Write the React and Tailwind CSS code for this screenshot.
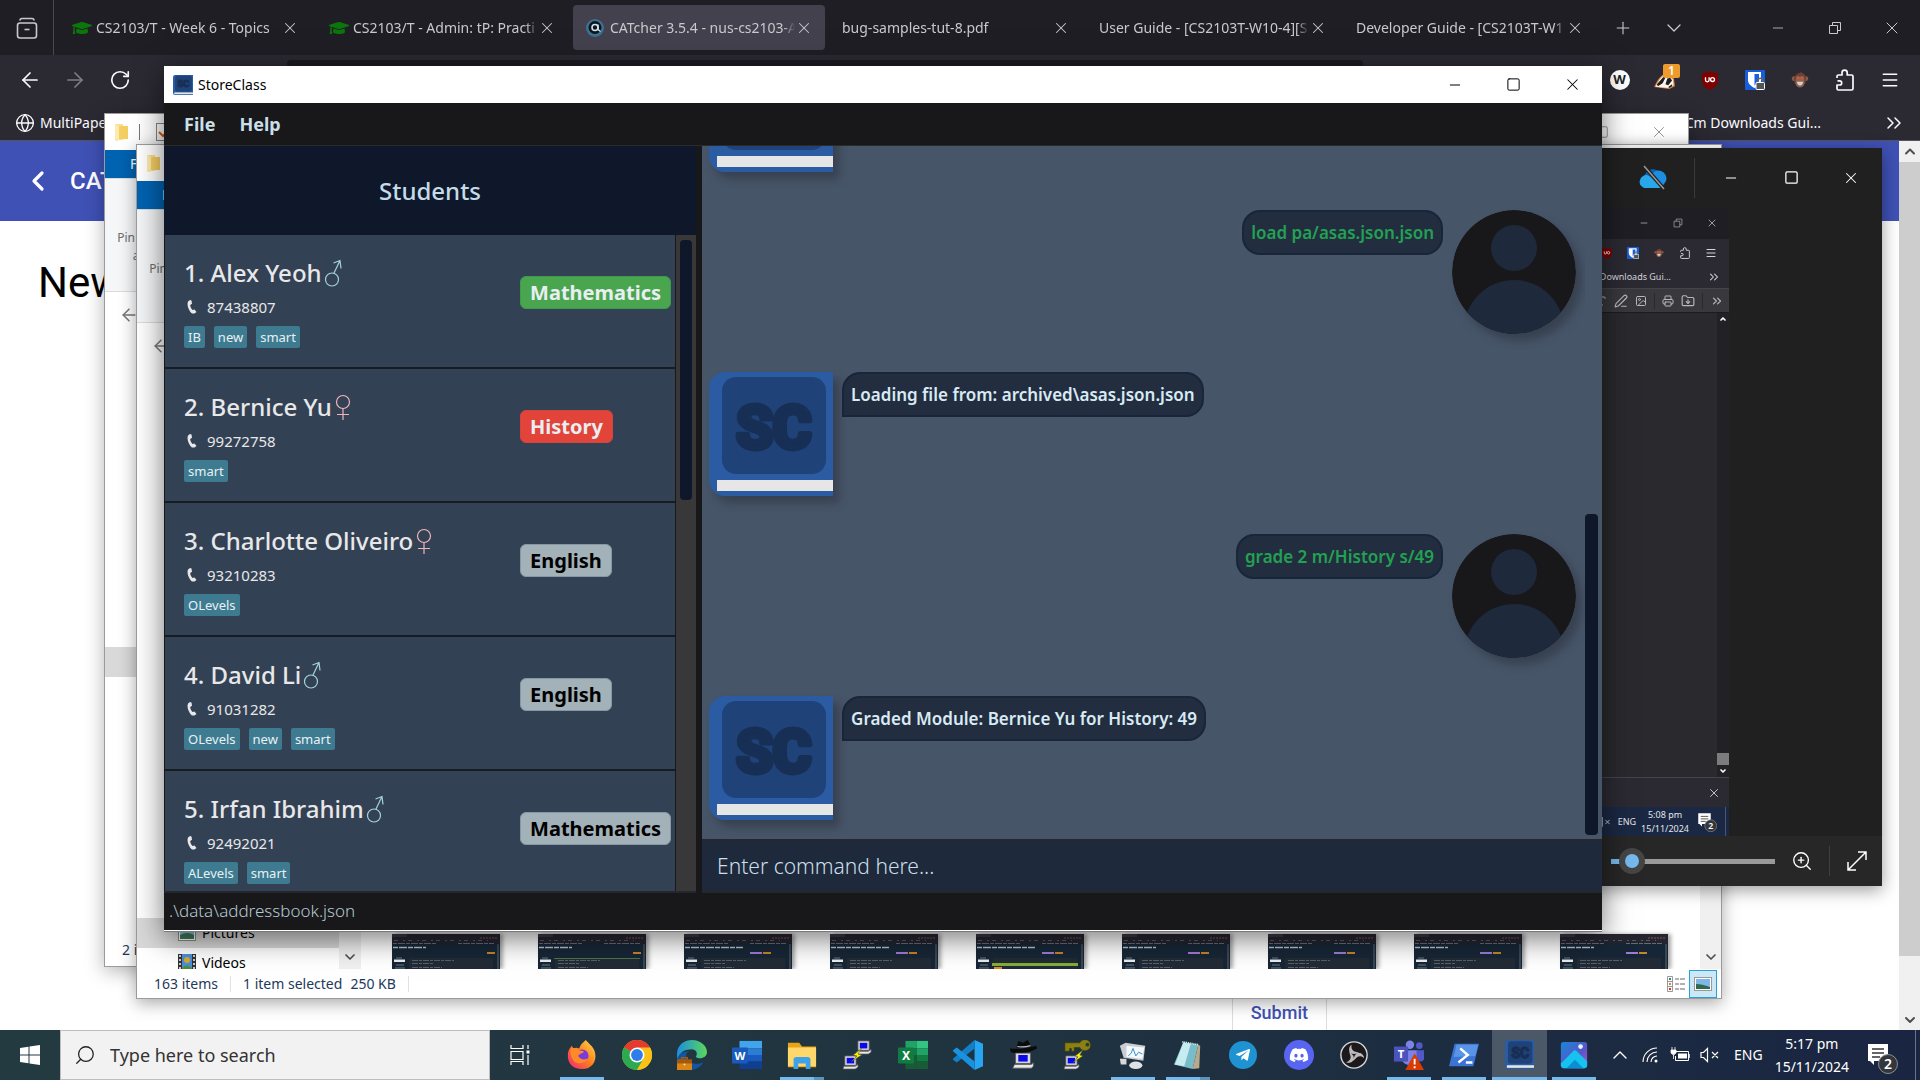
import React from "react";
import {
  ArrowLeft, ArrowRight, ChevronDown, ChevronLeft, ChevronUp, ChevronsRight, FolderDown,
  Globe, Image as ImageIcon, Menu, Minus, PenLine, Plus, Printer, RotateCw, Search, Square, Type, X, ZoomIn,
} from "lucide-react";
import { FaGraduationCap, FaDiscord, FaTelegramPlane } from "react-icons/fa";

/* ---------- shared drawings ---------- */

function BookLogo({ className }) {
  return (
    <svg viewBox="0 0 124 124" className={className} aria-hidden="true">
      <path d="M14 0H124V124H14A14 14 0 0 1 0 110V14A14 14 0 0 1 14 0Z" fill="#2b5ca3" />
      <rect x="13" y="5" width="104" height="97" rx="14" fill="#1f4378" />
      <rect x="8" y="108" width="116" height="11" fill="#e6e6e6" />
      <text x="65" y="76" textAnchor="middle" fontFamily="Roboto, sans-serif"
        fontWeight="700" fontSize="59" fill="#172e55" stroke="#172e55" strokeWidth="6" strokeLinejoin="round">SC</text>
    </svg>
  );
}

function Person({ className }) {
  return (
    <svg viewBox="0 0 124 124" className={className} aria-hidden="true">
      <defs><clipPath id="face"><circle cx="62" cy="62" r="62" /></clipPath></defs>
      <g clipPath="url(#face)">
        <rect width="124" height="124" fill="#18181b" />
        <circle cx="62" cy="38" r="23" fill="#1e293b" />
        <circle cx="62" cy="120" r="50" fill="#1e293b" />
      </g>
    </svg>
  );
}

function Restore({ className }) {
  return (
    <svg viewBox="0 0 14 14" className={className} fill="none" stroke="currentColor">
      <path d="M1.5 4.5h8v8h-8zM4.5 4.5v-3h8v8h-3" />
    </svg>
  );
}

function PuzzlePiece({ className }) {
  return (
    <svg viewBox="0 0 20 22" className={className} fill="none" stroke="currentColor" strokeWidth="1.700" strokeLinejoin="round">
      <path d="M2 9V7.500q0-1.500 1.500-1.500H7V3.800a2.600 2.600 0 0 1 5.200 0V6h4.300Q18 6 18 7.500v12q0 1.500-1.500 1.500h-13Q2 21 2 19.500V16h2.600a2.100 2.100 0 0 0 0-4.200H2.500" />
    </svg>
  );
}

function UBlock({ className }) {
  return (
    <svg viewBox="0 0 20 22" className={className}>
      <path d="M10 1c3 2 6 2.500 9 2.500V11c0 6-4 8.500-9 11C5 19.500 1 17 1 11V3.500C4 3.500 7 3 10 1z" fill="#800000" />
      <path d="M5 8v3a2 2 0 0 0 4 0V8" fill="none" stroke="#fff" strokeWidth="1.500" />
      <circle cx="12.800" cy="10.500" r="2.200" fill="none" stroke="#fff" strokeWidth="1.500" />
    </svg>
  );
}

function Bitwarden({ className }) {
  return (
    <svg viewBox="0 0 20 20" className={className}>
      <rect width="20" height="20" rx="1" fill="#175ddc" />
      <path d="M3 2h13v8c0 4-3.500 6.500-6.500 8C6.500 16.500 3 14 3 10z" fill="#fff" />
      <path d="M9.500 4H14v6c0 2.500-2 4-4.500 5.500z" fill="#175ddc" />
      <rect x="11" y="12.500" width="8.500" height="7" rx="1" fill="#555" stroke="#fff" />
      <path d="M13 12v-1.500a2.300 2.300 0 0 1 4.600 0V12" fill="none" stroke="#666" strokeWidth="1.500" />
    </svg>
  );
}

function Monkey({ className }) {
  return (
    <svg viewBox="0 0 20 20" className={className}>
      <circle cx="3.500" cy="8.500" r="2.700" fill="#8a5a46" />
      <circle cx="16.500" cy="8.500" r="2.700" fill="#8a5a46" />
      <path d="M10 2c1-1.500 1.500-1 1.500 0C15.500 3 17 6 16.500 10.500S13 18.500 10 18.500 4 15 3.500 10.500 5.500 3 10 2z" fill="#6b4232" />
      <path d="M5.500 7q2-2.500 4.500-.5 2.500-2 4.500.5l.5 6q-1 5-5 5t-5-5z" fill="#8f6250" />
      <circle cx="7.800" cy="7.800" r="1.300" fill="#e0503e" />
      <circle cx="12.200" cy="7.800" r="1.300" fill="#e0503e" />
      <path d="M6.500 12h7q-.5 4-3.500 4t-3.500-4z" fill="#d5cfcc" />
    </svg>
  );
}

function Badger({ className }) {
  return (
    <svg viewBox="0 0 22 18" className={className}>
      <path d="M0 16C3 9 7 3 13 1l8 6 1 8-6 3z" fill="#e2853d" />
      <path d="M1.500 15.500C5 9 8 4 13 2.500l7 5.500.5 6-5 3z" fill="#f8f5f0" />
      <path d="M3 13l7-8 3-1-4 8-5 3zM12 13l2-6 3-1 2 3-4 5zM15 16l4-3v2l-3 2z" fill="#1e1e1e" />
    </svg>
  );
}

function Cloud({ className }) {
  return (
    <svg viewBox="0 0 28 26" className={className}>
      <path d="M7 8a8 8 0 0 1 14 1l-8 8-9-4z" fill="#0f62b5" />
      <path d="M12 11a7 7 0 0 1 15 5l-4 6-14-6z" fill="#1c8fe3" />
      <path d="M1 15a6 6 0 0 1 9-4l14 9-3 3H7a6 6 0 0 1-6-8z" fill="#28a8ea" />
      <path d="M5 1l20 23" stroke="#202020" strokeWidth="4" />
      <path d="M5 1l20 23" stroke="#9a9a9a" strokeWidth="1.500" />
    </svg>
  );
}

function Mute({ className }) {
  return (
    <svg viewBox="0 0 20 16" className={className} fill="none" stroke="currentColor" strokeWidth="1.200">
      <path d="M1 5.500h2.500l4-4v13l-4-4H1zM12 5l6 6M18 5l-6 6" />
    </svg>
  );
}

function Notice({ className }) {
  return (
    <svg viewBox="0 0 32 32" className={className}>
      <path d="M2 2h20v17h-14v4l-4-4H2z" fill="#fff" />
      <path d="M6 7h12M6 11h12M6 15h8" stroke="#333" strokeWidth="1.300" />
      <circle cx="22" cy="22" r="9.500" fill="#34363b" stroke="#8b8e93" />
      <text x="22" y="27" textAnchor="middle" fontFamily="Noto Sans, sans-serif" fontWeight="600" fontSize="14" fill="#fff">2</text>
    </svg>
  );
}

/* ---------- browser ---------- */

const tabs = [
  { title: "CS2103/T - Week 6 - Topics", icon: "cap" },
  { title: "CS2103/T - Admin: tP: Practi", icon: "cap" },
  { title: "CATcher 3.5.4 - nus-cs2103-A", icon: "cat", active: true },
  { title: "bug-samples-tut-8.pdf" },
  { title: "User Guide - [CS2103T-W10-4][S" },
  { title: "Developer Guide - [CS2103T-W1" },
];

function Tab({ title, icon, active }) {
  return (
    <div className={`flex h-[45px] min-w-0 basis-[252px] items-center pr-3 ${icon ? "pl-[13px]" : "pl-3"} ${active ? "rounded bg-[#42414d]" : ""}`}>
      {icon === "cap" && <FaGraduationCap className="mr-1 h-5 w-5 shrink-0 text-[#0c750c]" />}
      {icon === "cat" && (
        <svg viewBox="0 0 18 18" className="mr-1.5 h-[18px] w-[18px] shrink-0">
          <circle cx="9" cy="9" r="9" fill="#3d7191" />
          <circle cx="9" cy="8.500" r="6.500" fill="#10151c" />
          <circle cx="9" cy="8.500" r="3" fill="none" stroke="#cfe4f2" strokeWidth="1.600" />
          <path d="M12 5.500v5l2.500 2" fill="none" stroke="#cfe4f2" strokeWidth="1.500" />
        </svg>
      )}
      <button className="min-w-0 flex-1 overflow-hidden text-left whitespace-nowrap [mask-image:linear-gradient(to_left,transparent,black_12px)]">{title}</button>
      <button aria-label={`Close ${title}`} className="shrink-0"><X className="h-[18px] w-[18px]" strokeWidth={1.4} /></button>
    </div>
  );
}

function Browser() {
  return (
    <div className="flex h-full flex-col">
      <div className="flex h-[55px] items-center bg-[#1f1e25] text-sm text-[#c9c9cd]">
        <div className="flex h-full w-[50px] grow-0 basis-[54px] items-center justify-center border-r border-[#4a4953]">
          <button aria-label="Recent windows">
            <svg viewBox="0 0 22 22" className="h-[22px] w-[22px]" fill="none" stroke="currentColor" strokeWidth="1.600">
              <path d="M4 3.500q0-2 2-2h10q2 0 2 2" />
              <rect x="1.500" y="6" width="19" height="15" rx="2.500" />
              <path d="M8.500 12.500h5" />
            </svg>
          </button>
        </div>
        <div className="flex min-w-0 flex-1 items-center gap-[5px] pl-[5px]">
          {tabs.map((t) => <Tab key={t.title} {...t} />)}
          <button aria-label="New tab" className="flex w-11 shrink-0 justify-center"><Plus className="h-5 w-5" strokeWidth={1.3} /></button>
          <button aria-label="List all tabs" className="flex w-12 shrink-0 justify-center"><ChevronDown className="h-6 w-6" strokeWidth={1.3} /></button>
        </div>
        <div className="flex shrink-0">
          <button aria-label="Minimize" className="flex w-[57px] items-center justify-center"><Minus className="h-4 w-4" strokeWidth={1.2} /></button>
          <button aria-label="Restore" className="flex w-[57px] items-center justify-center"><Restore className="h-3.5 w-3.5" /></button>
          <button aria-label="Close" className="flex w-[57px] items-center justify-center"><X className="h-5 w-5" strokeWidth={1.2} /></button>
        </div>
      </div>

      <div className="flex h-[50px] items-start bg-[#2b2a33] text-[#fbfbfe]">
        <div className="flex h-full w-[287px] items-center pl-[18px]">
          <button aria-label="Back" className="w-[45px]"><ArrowLeft className="h-6 w-6" strokeWidth={1.7} /></button>
          <button aria-label="Forward" className="w-[46px] text-[#7f7e85]"><ArrowRight className="h-6 w-6" strokeWidth={1.7} /></button>
          <button aria-label="Reload"><RotateCw className="h-[22px] w-[22px]" strokeWidth={1.8} /></button>
        </div>
        <div className="mt-[5px] h-10 flex-1 rounded bg-[#1c1b22]" />
        <div className="flex h-full w-[557px] items-center justify-end pr-2">
          <button aria-label="W extension" className="flex w-[45px] justify-center"><span className="flex h-5 w-5 items-center justify-center rounded-full bg-white text-[13px] font-bold text-[#222]">W</span></button>
          <button aria-label="Badger" className="relative flex w-[45px] justify-center">
            <Badger className="h-[17px] w-[21px]" />
            <span className="absolute -top-2 right-[7px] h-3.5 w-[17px] rounded-xs bg-[#ed9b2d] text-center text-xs leading-3.5 font-semibold text-white">1</span>
          </button>
          <button aria-label="uBlock" className="flex w-[45px] justify-center"><UBlock className="h-5 w-[18px]" /></button>
          <button aria-label="Bitwarden" className="flex w-[45px] justify-center"><Bitwarden className="h-5 w-5" /></button>
          <button aria-label="Monkey" className="flex w-[45px] justify-center"><Monkey className="h-[18px] w-[18px]" /></button>
          <button aria-label="Extensions" className="flex w-[45px] justify-center"><PuzzlePiece className="h-[22px] w-5" /></button>
          <button aria-label="Menu" className="flex w-[45px] justify-center"><Menu className="h-5 w-5" strokeWidth={1.8} /></button>
        </div>
      </div>

      <div className="flex h-9 items-center border-b border-[#55545e] bg-[#2b2a33] pr-3.5 pl-[15px] text-sm text-[#fbfbfe]">
        <Globe className="h-5 w-5" strokeWidth={1.6} />
        <a href="#multipaper" className="ml-[5px] flex-1">MultiPaper</a>
        <a href="#downloads" className="mr-[61px]">Cm Downloads Gui...</a>
        <ChevronsRight className="h-6 w-6" strokeWidth={1.5} />
      </div>

      <div className="flex min-h-0 flex-1 bg-white font-['Roboto',sans-serif]">
        <div className="flex min-w-0 flex-1 flex-col">
          <header className="flex h-20 items-center bg-[#3f51b5] pl-[22px] text-white">
            <button aria-label="Go back" className="w-12"><ChevronLeft className="h-8 w-8" strokeWidth={2.4} /></button>
            <span className="text-2xl font-medium">CATcher</span>
          </header>
          <h1 className="px-[38px] pt-9 text-[42px] leading-[52px] text-black">New Issue</h1>
          <div className="mt-auto flex justify-end pr-[572px]">
            <button className="h-[50px] border border-b-0 border-[#dcdcdc] px-[18px] pt-3.5 text-lg leading-8 font-medium text-[#3f51b5]">Submit</button>
          </div>
        </div>
        <div className="flex w-[21px] flex-col items-center bg-[#f0f0f0] text-[#505050]">
          <ChevronUp className="h-[21px] w-4" strokeWidth={3} />
          <div className="w-full flex-1 bg-[#cdcdcd]" />
          <div className="flex h-[74px] items-end pb-0.5"><ChevronDown className="h-4 w-4" strokeWidth={3} /></div>
        </div>
      </div>
    </div>
  );
}

/* ---------- file explorer ---------- */

function FolderIcon() {
  return (
    <svg viewBox="0 0 14 18" className="h-[18px] w-3.5">
      <path d="M0 1h8v16H4l-2 1-2-1z" fill="#fbe08a" />
      <path d="M4 3h9v13H4z" fill="#f5cf63" />
      <path d="M0 1l4 2v14l-4-1z" fill="#fdeab0" />
    </svg>
  );
}

function ExplorerTop() {
  return (
    <>
      <div className="flex h-9 shrink-0 items-center pl-[10px] text-[#888]">
        <FolderIcon />
        <div className="ml-2.5 h-4 w-px bg-[#777]" />
        <svg viewBox="0 0 18 18" className="ml-4 h-[18px] w-[18px]" fill="none">
          <rect x=".5" y=".5" width="17" height="17" stroke="#888" />
          <path d="M3 9l4 4 8-8" stroke="#e0571b" strokeWidth="2" />
        </svg>
        <div className="ml-auto flex">
          <button aria-label="Maximize" className="flex w-14 items-center justify-center"><Square className="h-3.5 w-3.5" strokeWidth={1.5} /></button>
          <button aria-label="Close" className="flex w-[58px] items-center justify-center"><X className="h-[18px] w-[18px]" strokeWidth={1.2} /></button>
        </div>
      </div>
      <div className="h-7 shrink-0 bg-[#0063b1] pl-[25px] text-sm leading-7 text-white">File</div>
      <div className="h-[114px] shrink-0 border-y border-[#dadbdc] bg-[#f5f6f7] pt-[50px]">
        <div className="w-[92px] text-center text-xs leading-[18px] text-[#6d6d6d]">Pin to Quick access</div>
      </div>
      <div className="flex h-[45px] shrink-0 items-center pl-3.5 text-[#777]"><ArrowLeft className="h-5 w-5" strokeWidth={1.8} /></div>
    </>
  );
}

function Thumb({ kind }) {
  const wide = kind > 1;
  return (
    <svg viewBox="0 0 108 35" className="h-[35px] w-full max-w-[108px] shadow-[3px_0_4px_rgba(0,0,0,0.35)]" preserveAspectRatio="none">
      <rect width="108" height="35" fill="#172636" />
      <rect width="108" height="9" fill="#26242f" />
      <rect width="15" height="3" fill="#3a3843" />
      <path d="M2 6.500h94" stroke="#5d5965" strokeDasharray="4 5 2 3" />
      <path d="M88 4h18" stroke="#80564c" strokeDasharray="2 1" />
      <path d="M1 9.500h44M66 9.500h36" stroke="#626b78" strokeDasharray="4 1 7 1" />
      <path d={wide && kind < 5 ? "M1 13.500h58" : "M1 13.500h33"} stroke="#b5bfca" strokeWidth="1.500" strokeDasharray="5 1 8 1" />
      {wide && <rect x="66" y="18" width="12" height="2" fill="#a07ad6" />}
      <rect x={wide ? 79 : 95} y="18" width="8" height="2" fill="#c98422" />
      <rect x="17" y="24" width="84" height="11" fill="#222b35" />
      {kind === 4 ? <rect x="16" y="29" width="86" height="3" fill="#7fae36" /> : <path d="M20 26.500h42M20 29.500h22M20 33.500h30" stroke="#55616c" strokeDasharray="6 1 3 1" />}
      {kind === 4 && <rect x="18" y="33" width="8" height="2" fill="#e08a1c" />}
      {kind === 1 && <path d="M16 24.500h86" stroke="#4c7846" />}
      <rect x="2" y="25.500" width="11" height="2.500" fill="#e9edf0" />
      <path d="M4 24h6M4 31h8M3 34h10" stroke="#6c7781" />
      <rect x="105" y="10" width="2" height="25" fill="#3c4650" />
    </svg>
  );
}

function ExplorerBack() {
  return (
    <section aria-label="Explorer" className="absolute top-[113px] right-[231px] bottom-[113px] left-[104px] flex flex-col overflow-hidden border border-[#9b9b9b] bg-white shadow-[0_4px_18px_rgba(0,0,0,0.3)]">
      <ExplorerTop />
      <div className="flex-1 pt-[310px]"><div className="h-[30px] w-60 bg-[#d9d9d9]" /></div>
      <div className="h-8 shrink-0 pl-[17px] text-sm leading-8 text-[#1e395b]">2 items</div>
    </section>
  );
}

function ExplorerFront() {
  return (
    <section aria-label="Pictures" className="absolute top-[144px] right-[198px] bottom-[81px] left-[136px] flex flex-col overflow-hidden border border-[#9b9b9b] bg-white shadow-[0_4px_16px_rgba(0,0,0,0.35)]">
      <ExplorerTop />
      <div className="flex min-h-0 flex-1 overflow-hidden">
        <div className="flex w-[202px] shrink-0 flex-col justify-end overflow-hidden text-sm text-black">
          <div className="flex h-[30px] shrink-0 items-center gap-1.5 bg-[#d9d9d9] pl-[41px]">
            <svg viewBox="0 0 18 16" className="h-4 w-[18px]"><rect x=".5" y=".5" width="17" height="15" fill="#fff" stroke="#8a8a8a" /><rect x="2" y="2" width="14" height="12" fill="#8fc4e8" /><path d="M2 10q7-4 14 0v4H2z" fill="#3f7a55" /></svg>
            Pictures
          </div>
          <div className="-mb-[9px] flex h-[30px] shrink-0 items-center gap-1.5 pl-[41px]">
            <svg viewBox="0 0 18 18" className="h-[18px] w-[18px]"><rect width="18" height="18" fill="#333" /><rect x="4" width="10" height="18" fill="#4a8fd8" /><circle cx="9" cy="6" r="3" fill="#d8a928" /><path d="M4 14q5-5 10 0v4H4z" fill="#4f8d3b" /><path d="M2 1v16M16 1v16" stroke="#fff" strokeWidth="1.500" strokeDasharray="2 2" /></svg>
            Videos
          </div>
        </div>
        <div className="flex w-[21px] shrink-0 items-end justify-center bg-[#f0f0f0] pb-1 text-[#505050]"><ChevronDown className="h-4 w-4" strokeWidth={2.6} /></div>
        <div className="flex min-w-0 flex-1 items-end gap-[38px] overflow-hidden border-l border-[#f0f0f0] pl-[31px]">
          {[0, 1, 2, 3, 4, 5, 6, 7, 8].map((k) => <div key={k} className="min-w-0 basis-[108px]"><Thumb kind={k} /></div>)}
        </div>
        <div className="flex w-[21px] shrink-0 items-end justify-center bg-[#f0f0f0] pb-1 text-[#505050]"><ChevronDown className="h-4 w-4" strokeWidth={2.6} /></div>
      </div>
      <div className="flex h-[29px] shrink-0 items-center pl-[17px] text-sm text-[#1e395b]">
        <span>163 items</span>
        <span className="mr-3 ml-3 h-4 w-px bg-[#e2e2e2]" />
        <span>1 item selected</span>
        <span className="ml-2">250 KB</span>
        <span className="ml-3 h-4 w-px bg-[#e2e2e2]" />
        <div className="ml-auto flex items-center gap-1 pr-1">
          <button aria-label="Details view">
            <svg viewBox="0 0 18 16" className="h-4 w-[18px]"><path d="M.5.5h5v15h-5zM.5 5.500h5M.5 10.500h5" fill="#fff" stroke="#999" /><path d="M8 3h4M13 3h5M8 8h4M13 8h5M8 13h4M13 13h5" stroke="#666" /><rect x="2" y="2" width="2" height="2" fill="#2f7d8f" /><rect x="2" y="7" width="2" height="2" fill="#c98a2a" /><rect x="2" y="12" width="2" height="2" fill="#c0392b" /></svg>
          </button>
          <button aria-label="Large icons view" className="flex h-7 w-7 items-center justify-center border border-[#2a9fd6] bg-[#cce8f6]">
            <svg viewBox="0 0 18 14" className="h-3.5 w-[18px]"><rect x=".5" y=".5" width="17" height="13" fill="#fff" stroke="#999" /><rect x="2" y="2" width="14" height="10" fill="#7fb8e8" /><path d="M2 7q6 0 14 3v2H2z" fill="#2f6b4a" /></svg>
          </button>
        </div>
      </div>
    </section>
  );
}

/* ---------- photo viewer ---------- */

function PhotoContent() {
  return (
    <div className="flex min-h-0 flex-1 flex-col text-[9px] text-[#d5d5d8]">
      <div className="flex h-8 items-center justify-end bg-[#1f1e25] text-[#a9a9ad]">
        <span className="flex w-[34px] justify-center"><Minus className="h-2.5 w-2.5" strokeWidth={2} /></span>
        <span className="flex w-[34px] justify-center"><Restore className="h-2.5 w-2.5" /></span>
        <span className="flex w-[34px] justify-center"><X className="h-3 w-3" strokeWidth={1.8} /></span>
      </div>
      <div className="flex h-[27px] items-center justify-end bg-[#2b2a33] pr-[5px]">
        <span className="flex w-[26px] justify-center"><UBlock className="h-3 w-3" /></span>
        <span className="flex w-[26px] justify-center"><Bitwarden className="h-3 w-3" /></span>
        <span className="flex w-[26px] justify-center"><Monkey className="h-2.5 w-2.5" /></span>
        <span className="flex w-[26px] justify-center"><PuzzlePiece className="h-3 w-3" /></span>
        <span className="flex w-[26px] justify-center"><Menu className="h-3 w-3" /></span>
      </div>
      <div className="flex h-[23px] items-center justify-end border-b border-[#45444d] bg-[#2b2a33] pr-2">
        <span className="mr-9">Cm Downloads Gui...</span>
        <ChevronsRight className="h-3.5 w-3.5" strokeWidth={1.8} />
      </div>
      <div className="flex h-6 items-center justify-end gap-[7px] border-b border-[#1c1b22] bg-[#38383d] pr-[5px] text-[#b8b8bc]">
        <Type className="h-3 w-3" /><PenLine className="h-3.5 w-3.5" /><ImageIcon className="h-3 w-3" />
        <span className="h-4 w-px bg-[#2a2a2e]" />
        <Printer className="h-3 w-3" /><FolderDown className="h-3.5 w-3.5" />
        <span className="h-4 w-px bg-[#2a2a2e]" />
        <ChevronsRight className="h-3.5 w-3.5" />
      </div>
      <div className="flex min-h-0 flex-1 bg-[#2a2a2e]">
        <div className="ml-auto flex w-3 flex-col items-center bg-[#212126] text-white">
          <ChevronUp className="h-3 w-2" strokeWidth={5} />
          <div className="mt-auto h-3 w-full bg-[#7c7c7e]" />
          <ChevronDown className="h-3 w-2" strokeWidth={5} />
        </div>
      </div>
      <div className="flex h-[30px] items-center justify-end border-t border-[#45444d] bg-[#2b2a33] pr-2"><X className="h-3.5 w-3.5" strokeWidth={1.5} /></div>
      <div className="flex h-[29px] items-center justify-end bg-[#1b2843] text-[9px] leading-[14px] text-[#e3e6ec]">
        <Mute className="mr-[7px] h-3 w-3.5" />
        <span className="mr-[5px]">ENG</span>
        <span className="mr-2 text-center">5:08 pm<br />15/11/2024</span>
        <Notice className="h-5 w-5" />
        <span className="mr-[3px] ml-2 h-full w-px bg-[#4a5670]" />
      </div>
    </div>
  );
}

function Photos() {
  return (
    <section aria-label="Photos" className="absolute top-[148px] right-[38px] bottom-[194px] left-[46%] flex flex-col overflow-hidden bg-[#202020] text-white shadow-[0_4px_16px_rgba(0,0,0,0.4)]">
      <div className="flex h-[59px] shrink-0 items-center justify-end pr-px">
        <span className="mr-[38px] h-5 w-5 rounded-xs border border-[#4a3585]" />
        <Cloud className="mr-[27px] h-[26px] w-7" />
        <span className="mr-1.5 h-10 w-px bg-[#3a3a3a]" />
        <button aria-label="Minimize" className="flex w-[60px] items-center justify-center"><Minus className="h-4 w-4" strokeWidth={1.5} /></button>
        <button aria-label="Maximize" className="flex w-[60px] items-center justify-center"><Square className="h-[15px] w-[15px]" strokeWidth={2} /></button>
        <button aria-label="Close" className="flex w-[60px] items-center justify-center"><X className="h-[18px] w-[18px]" strokeWidth={1.4} /></button>
      </div>
      <div className="flex min-h-0 flex-1 pr-[153px]"><PhotoContent /></div>
      <div className="flex h-[50px] shrink-0 items-center justify-end bg-[#272727] pr-3.5">
        <input type="range" aria-label="Zoom" min="0" max="100" defaultValue="6"
          className="mr-4 h-[26px] w-[164px] appearance-none bg-[linear-gradient(to_right,#76b9ed_12%,#9a9a9a_12%)] bg-[length:100%_5px] bg-center bg-no-repeat [&::-webkit-slider-thumb]:h-[26px] [&::-webkit-slider-thumb]:w-[26px] [&::-webkit-slider-thumb]:appearance-none [&::-webkit-slider-thumb]:rounded-full [&::-webkit-slider-thumb]:border-[6px] [&::-webkit-slider-thumb]:border-[#454545] [&::-webkit-slider-thumb]:bg-[#76b9ed]" />
        <button aria-label="Zoom in"><ZoomIn className="h-[22px] w-[22px]" strokeWidth={1.5} /></button>
        <span className="mr-4 ml-4 h-[30px] w-px bg-[#3f3f3f]" />
        <button aria-label="Full screen">
          <svg viewBox="0 0 22 22" className="h-[22px] w-[22px]" fill="none" stroke="currentColor" strokeWidth="1.500"><path d="M2 20L20 2M12 2h8v8M2 12v8h8" /></svg>
        </button>
      </div>
    </section>
  );
}

/* ---------- StoreClass ---------- */

const students = [
  { name: "Alex Yeoh", male: true, phone: "87438807", tags: ["IB", "new", "smart"], module: "Mathematics", grade: "good" },
  { name: "Bernice Yu", male: false, phone: "99272758", tags: ["smart"], module: "History", grade: "bad" },
  { name: "Charlotte Oliveiro", male: false, phone: "93210283", tags: ["OLevels"], module: "English", grade: "none" },
  { name: "David Li", male: true, phone: "91031282", tags: ["OLevels", "new", "smart"], module: "English", grade: "none" },
  { name: "Irfan Ibrahim", male: true, phone: "92492021", tags: ["ALevels", "smart"], module: "Mathematics", grade: "none" },
];

const gradeStyle = {
  good: "border-[#3f9a4d] bg-[#4aa54f] text-[#e8eef2]",
  bad: "border-[#d0453f] bg-[#e2443a] text-[#e8eef2]",
  none: "border-[#8797a3] bg-[#a3b1b8] text-black",
};

function Gender({ male }) {
  return male ? (
    <svg viewBox="0 0 18 28" className="ml-0.5 h-7 w-[18px]" fill="none" stroke="#a5d3dc" strokeWidth="1.200">
      <ellipse cx="8" cy="20.500" rx="6.500" ry="6.500" /><path d="M10 14L16 1.500M9.500 4L16 1.500l1 8" />
    </svg>
  ) : (
    <svg viewBox="0 0 18 28" className="ml-0.5 h-7 w-[18px]" fill="none" stroke="#f2b3bd" strokeWidth="1.200">
      <ellipse cx="9" cy="9" rx="6.500" ry="6.500" /><path d="M9 15.500V27M3 21.500h12" />
    </svg>
  );
}

function StudentCard({ index, name, male, phone, tags, module, grade }) {
  return (
    <li className="grid h-[134px] shrink-0 grid-cols-[1fr_155px] border-b-2 border-[#161b24] bg-[#334155] pt-5 pl-[19px]">
      <div>
        <h3 className="flex h-9 items-center text-2xl font-medium text-[#e8e8e8]">{index}. {name}<Gender male={male} /></h3>
        <p className="mt-1.5 flex h-5 items-center text-[15px] text-[#e8e8e8]">
          <svg viewBox="0 0 10 14" className="mr-2.5 ml-[3px] h-3.5 w-2.5" fill="#e8e8e8"><path d="M3 0L1 1.500C-.5 5 2 11 5 13.500h2.500l2-1.500-2-2.500-2 .5C4 8.500 3.200 6.500 3.200 5L5 3.800 4.500.5z" /></svg>
          {phone}
        </p>
        <div className="mt-[9px] flex gap-[9px]">
          {tags.map((t) => <span key={t} className="h-[22px] rounded-xs bg-[#3e7b91] px-1 text-[13px] leading-[22px] text-[#e8f0f4]">{t}</span>)}
        </div>
      </div>
      <span className={`mt-[21px] h-[33px] self-start justify-self-start rounded-md border px-[9px] text-xl leading-[31px] font-bold ${gradeStyle[grade]}`}>{module}</span>
    </li>
  );
}

function Message({ user, children }) {
  return (
    <div className={`flex h-[124px] shrink-0 items-start gap-[9px] ${user ? "flex-row-reverse" : ""}`}>
      {user
        ? <Person className="h-[124px] w-[124px] rounded-full shadow-[6px_7px_8px_rgba(40,45,55,0.5)]" />
        : <BookLogo className="h-[124px] w-[124px] rounded-l-2xl shadow-[6px_7px_8px_rgba(40,45,55,0.5)]" />}
      {children && (
        <p className={`h-[45px] rounded-t-[18px] border-2 border-[#18253a] bg-[#222d3f] px-[7px] text-[17px] leading-[41px] font-semibold ${user ? "rounded-b-[18px] text-[#22a152]" : "rounded-br-[18px] text-[#d8eaf4]"}`}>{children}</p>
      )}
    </div>
  );
}

function StoreClass() {
  return (
    <section aria-label="StoreClass" className="absolute top-[66px] right-[318px] bottom-[148px] left-[164px] flex flex-col border-b border-[#77777b] bg-[#18181a] shadow-[0_6px_28px_rgba(0,0,0,0.55)]">
      <div className="flex h-[37px] shrink-0 items-center bg-white text-black">
        <BookLogo className="ml-[9px] h-5 w-5" />
        <span className="ml-[5px] text-sm">StoreClass</span>
        <div className="ml-auto flex">
          <button aria-label="Minimize" className="flex w-[58px] items-center justify-center"><Minus className="h-4 w-4" strokeWidth={1.5} /></button>
          <button aria-label="Maximize" className="flex w-[58px] items-center justify-center"><Square className="h-[15px] w-[15px]" strokeWidth={1.6} /></button>
          <button aria-label="Close" className="flex w-[60px] items-center justify-center"><X className="h-[19px] w-[19px]" strokeWidth={1.3} /></button>
        </div>
      </div>
      <nav className="flex h-[43px] shrink-0 items-center gap-6 border-b border-[#2a2a2c] pl-5 text-lg font-bold text-[#c9dfea]">
        <button>File</button>
        <button>Help</button>
      </nav>
      <div className="flex min-h-0 flex-1 gap-1.5">
        <div className="flex w-[37%] flex-col border-b-2 border-[#26272c]">
          <h2 className="flex h-[89px] shrink-0 items-center justify-center bg-[#0f172a] text-2xl font-medium text-[#c3dce8]">Students</h2>
          <div className="flex min-h-0 flex-1">
            <ul className="ml-px flex min-w-0 flex-1 flex-col overflow-hidden">
              {students.map((s, i) => <StudentCard key={s.name} index={i + 1} {...s} />)}
            </ul>
            <div className="ml-px w-5 shrink-0 bg-[#383838] px-1 pt-[5px]"><div className="h-[260px] rounded bg-[#0f172a]" /></div>
          </div>
        </div>
        <div className="flex min-w-0 flex-1 flex-col">
          <div className="flex min-h-0 flex-1 overflow-hidden bg-[#475569]">
            <div className="flex min-h-0 min-w-0 flex-1 flex-col justify-end gap-[38px] overflow-hidden pr-[9px] pb-[19px] pl-[7px]">
              <Message />
              <Message user>load pa/asas.json.json</Message>
              <Message>Loading file from: archived\asas.json.json</Message>
              <Message user>grade 2 m/History s/49</Message>
              <Message>Graded Module: Bernice Yu for History: 49</Message>
            </div>
            <div className="flex w-[17px] shrink-0 items-end pb-1"><div className="h-[321px] w-[13px] rounded bg-[#0f172a]" /></div>
          </div>
          <input type="text" aria-label="Command" placeholder="Enter command here..."
            className="h-[54px] w-full shrink-0 border-y-2 border-[#26272c] bg-[#1e293b] px-[15px] text-[21px] font-light text-white outline-none placeholder:text-[#c9dfea] placeholder:opacity-100" />
        </div>
      </div>
      <footer className="h-[38px] shrink-0 border-b border-white pl-[5px] text-[17px] leading-9 font-light text-[#b5c8d2]">.\data\addressbook.json</footer>
    </section>
  );
}

/* ---------- taskbar ---------- */

const Svg = ({ children }) => <svg viewBox="0 0 32 32" className="h-[30px] w-[30px]">{children}</svg>;

const Monitor = ({ x, y }) => (
  <g transform={`translate(${x} ${y})`}>
    <path d="M2 0h12v10H2z" fill="#d9d9d9" stroke="#555" strokeWidth=".8" /><path d="M4 2h8v6H4z" fill="#0a0ae6" />
    <path d="M1 11h12l3-2v3l-3 2H0z" fill="#e8e8e8" stroke="#555" strokeWidth=".8" />
  </g>
);

const icons = {
  Firefox: <Svg><defs><linearGradient id="ff" x1="1" y1="0" x2="0" y2="1"><stop offset="0" stopColor="#ffe14d" /><stop offset=".5" stopColor="#ff7a1f" /><stop offset="1" stopColor="#f0247a" /></linearGradient></defs><path d="M20 0c2 3 9 7 10 14 2 9-4 17-14 17S0 25 1 15c0-4 2-6 4-9l2 3c2-1 4-1 6 0 1-4 4-6 7-9z" fill="url(#ff)" /><circle cx="16" cy="17" r="7" fill="#7a3bd8" /><path d="M4 9c4-1 7 0 9 2l5 1c-1 3-5 2-6 5 2 4 7 5 11 2-2 6-11 8-16 3-3-4-4-9-3-13z" fill="#ff8a2a" /></Svg>,
  Chrome: <Svg><circle cx="16" cy="16" r="16" fill="#fbc116" /><path d="M16 16L2.100 8A16 16 0 0 1 29.900 8z" fill="#e33b2e" /><path d="M16 16L2.100 8A16 16 0 0 0 16 32l7-12z" fill="#2da94f" /><path d="M16 8h13.900A16 16 0 0 1 16 32l7-12z" fill="#fbc116" /><circle cx="16" cy="16" r="8" fill="#fff" /><circle cx="16" cy="16" r="6.300" fill="#2f7de9" /></Svg>,
  Edge: <Svg><defs><linearGradient id="eg"><stop offset="0" stopColor="#1a8ee0" /><stop offset="1" stopColor="#5bd75b" /></linearGradient></defs><path d="M0 15C0 6 7 0 16 0s16 6 16 13c0 6-8 8-12 5 3-4 0-9-6-8-8 0-12 5-14 12z" fill="url(#eg)" /><path d="M10 15c-1 8 6 13 18 9-3 5-8 8-14 8C5 31 0 25 0 20c3-6 7-8 13-8-2 1-3 2-3 3z" fill="#12569e" /><path d="M0 21h16v11H0z" fill="#d98616" /><path d="M0 21h16v4H0z" fill="#a8570c" /><path d="M5 21v-2h6v2" stroke="#a8570c" strokeWidth="1.500" fill="none" /><circle cx="8" cy="26" r="1" fill="#ffe9a8" /></Svg>,
  Word: <Svg><path d="M8 1h24v8H8z" fill="#41a5ee" /><path d="M8 9h24v7H8z" fill="#2b7cd3" /><path d="M8 16h24v7H8z" fill="#185abd" /><path d="M8 23h24v8H8z" fill="#103f91" /><rect y="8" width="17" height="17" rx="1" fill="#185abd" /><text x="8.500" y="21" textAnchor="middle" fontFamily="Noto Sans, sans-serif" fontSize="12" fontWeight="700" fill="#fff">W</text></Svg>,
  Explorer: <Svg><path d="M1 3h12l3 4h15v22H1z" fill="#e8a317" /><path d="M1 8h30v20H1z" fill="#ffd76b" /><path d="M7 31V21q0-3 3-3h12q3 0 3 3v10h-5v-6h-8v6z" fill="#3ea2ea" /></Svg>,
  PuTTY: <Svg><Monitor x={15} y={1} /><Monitor x={1} y={17} /><path d="M21 9l-9 7 4 1-6 6 11-7-4-1z" fill="#fff200" stroke="#554" strokeWidth=".6" /></Svg>,
  Excel: <Svg><path d="M8 1h12v8H8z" fill="#21a366" /><path d="M20 1h12v8H20z" fill="#33c481" /><path d="M8 9h12v7H8z" fill="#107c41" /><path d="M20 9h12v7H20z" fill="#21a366" /><path d="M8 16h12v15H8z" fill="#185c37" /><path d="M20 16h12v7H20z" fill="#107c41" /><path d="M20 23h12v8H20z" fill="#185c37" /><rect y="8" width="17" height="17" rx="1" fill="#107c41" /><text x="8.500" y="21" textAnchor="middle" fontFamily="Noto Sans, sans-serif" fontSize="13" fontWeight="700" fill="#fff">X</text></Svg>,
  Code: <Svg><path d="M23 0l9 4v24l-9 4z" fill="#27a5f2" /><path d="M23 0v9L4 24l-4-3v-1z" fill="#1180c9" /><path d="M23 32v-9L4 8l-4 3v1z" fill="#1a92e0" /></Svg>,
  Pageant: <Svg><path d="M2 9c6 1 18 0 28-3l1 3c-8 5-20 6-28 4z" fill="#0b0b0b" /><path d="M9 8l2-7 5 2 5-3 4 7z" fill="#0b0b0b" /><path d="M10 7q7 1 14-1" stroke="#b9bec2" strokeWidth="1.200" fill="none" /><path d="M8 14h16v11H8z" fill="#d9d9d9" stroke="#555" strokeWidth=".8" /><path d="M11 16h10v7H11z" fill="#0a0ae6" /><path d="M7 26h18l2-2v4l-2 2H5z" fill="#e8e8e8" stroke="#555" strokeWidth=".8" /></Svg>,
  PuTTYgen: <Svg><path d="M2 3h16a6 6 0 1 1 0 5h-6v4H9V9H7v3H2z" fill="#8a8112" stroke="#3c3806" strokeWidth=".6" /><circle cx="26" cy="5" r="2" fill="#233a41" /><Monitor x={1} y={17} /><path d="M21 11l-8 6 3 1-5 6 10-7-3-1z" fill="#fff200" stroke="#554" strokeWidth=".6" /></Svg>,
  Monitoring: <Svg><path d="M2 6l6-3 21 3-2 16-21-3z" fill="#c9cdd0" /><path d="M9 6l19 2-2 12-17-2z" fill="#f4f8fb" /><path d="M11 17l3-3 2-5 3 8 3-4 4 2" fill="none" stroke="#2d8ac9" /><path d="M2 20h7v6H3z" fill="#d8d8d8" /><ellipse cx="19" cy="27" rx="7" ry="4" fill="#dfe2e4" /></Svg>,
  Notepad: <Svg><path d="M11 2l16 3-6 26L1 26z" fill="#78bcc9" /><path d="M11 3l8 1-7 24-10-2z" fill="#c7ecef" /><path d="M27 5l2 1-1 24-7 1z" fill="#b7a98a" /><path d="M10 2l17 3" stroke="#e7eef0" strokeWidth="2" strokeDasharray="1 1" /></Svg>,
  Telegram: <span className="flex h-[28px] w-[28px] items-center justify-center rounded-full bg-[#1f93d2]"><FaTelegramPlane className="h-4 w-4 text-white" /></span>,
  Discord: <span className="flex h-[30px] w-[30px] items-center justify-center rounded-full bg-[#5865f2]"><FaDiscord className="h-5 w-5 text-white" /></span>,
  OBS: <Svg><circle cx="16" cy="16" r="14" fill="#1b191c" stroke="#d8d8d8" strokeWidth="1.500" />{[0, 120, 240].map((a) => <path key={a} transform={`rotate(${a} 16 16)`} d="M16 15c-3 0-6-3-5-6.500.5-2 1.500-3 2.500-3.500-1 4 1 7 4.500 7.500 4 .5 6 3 6.500 5-2-2.500-5.500-3.500-8.500-2.500z" fill="#bdbabd" />)}</Svg>,
  Teams: <Svg><circle cx="17" cy="5" r="4.500" fill="#7b83eb" /><circle cx="27" cy="6" r="3.500" fill="#5059c9" /><path d="M9 11h16v12q-8 8-16 0z" fill="#7b83eb" /><path d="M24 11h8v10q-4 4-8 0z" fill="#5059c9" /><rect y="7" width="15" height="16" fill="#4b53bc" /><text x="7.500" y="19" textAnchor="middle" fontFamily="Noto Sans, sans-serif" fontSize="12" fontWeight="700" fill="#fff">T</text><path d="M22 14l10 18H12z" fill="#da3b01" /><path d="M22 20v6M22 28v2" stroke="#fff" strokeWidth="2" /></Svg>,
  PowerShell: <Svg><path d="M6 4h26l-6 24H0z" fill="#3a74d4" /><path d="M8 5h23l-3 12L5 18z" fill="#5a94e8" /><path d="M12 9l8 7-10 8M18 24h7" fill="none" stroke="#fff" strokeWidth="2.500" /></Svg>,
  StoreClass: <BookLogo className="h-[29px] w-[29px]" />,
  Photos: <Svg><defs><linearGradient id="ph" x1="0" y1="0" x2="1" y2="1"><stop offset="0" stopColor="#1688d8" /><stop offset=".6" stopColor="#5a55c8" /><stop offset="1" stopColor="#b25ad0" /></linearGradient></defs><rect x="2" y="2" width="28" height="28" rx="3" fill="url(#ph)" /><path d="M2 25L15 12q2-2 4 0l11 11v4q0 3-3 3H5q-3 0-3-3z" fill="#15c3ee" /><path d="M8 30l9-9 9 9z" fill="#0c8ed6" /><circle cx="23" cy="7" r="2.500" fill="#e8f4ff" /></Svg>,
};

const running = ["Firefox", "Explorer", "Monitoring", "Notepad", "Teams", "PowerShell", "StoreClass", "Photos"];
const grouped = ["Explorer", "Notepad"];

function Taskbar() {
  return (
    <div className="relative flex h-[50px] shrink-0 bg-linear-to-r from-[#233a41] via-[#203440] to-[#1a2542] text-white">
      <button aria-label="Start" className="flex w-[60px] shrink-0 items-center justify-center">
        <svg viewBox="0 0 20 20" className="h-5 w-5" fill="#fff"><path d="M0 3l8.500-1.300v7.800H0zM9.500 1.500L20 0v9.500H9.500zM0 10.500h8.500v7.800L0 17zM9.500 10.500H20V20L9.500 18.500z" /></svg>
      </button>
      <label className="flex w-[430px] shrink-0 items-center border border-[#bdbdbd] bg-[#f2f2f2] pl-[13px]">
        <Search className="h-[22px] w-[22px] -scale-x-100 text-[#222]" strokeWidth={1.4} />
        <input type="search" aria-label="Search" placeholder="Type here to search" className="ml-3.5 min-w-0 flex-1 bg-transparent text-lg text-black outline-none placeholder:text-[#333] placeholder:opacity-100" />
      </label>
      <button aria-label="Task view" className="flex w-16 shrink-0 items-center justify-center pr-1">
        <svg viewBox="0 0 20 20" className="h-5 w-5" fill="none" stroke="#fff" strokeWidth="1.200"><path d="M1 0v3.500h12V0M1 6.500h12v8H1zM1 20v-3.500h12V20M18 0v4M18 10v10" /><path d="M16.500 7h3" strokeWidth="3" /></svg>
      </button>
      <div className="flex min-w-0 flex-1">
        {Object.entries(icons).map(([name, icon]) => (
          <button key={name} aria-label={name} className={`flex min-w-0 flex-1 flex-col items-center ${name === "StoreClass" ? "bg-[#4a5868]" : ""}`}>
            <span className="flex h-[47px] items-center pt-0.5">{icon}</span>
            {running.includes(name) && (
              <span className={`flex h-[3px] justify-end bg-[#76b9ed] ${name === "StoreClass" ? "w-full" : "w-[44px]"}`}>
                {grouped.includes(name) && <span className="h-full w-2.5 bg-[#5f92ba]" />}
              </span>
            )}
          </button>
        ))}
      </div>
      <div className="flex w-[318px] shrink-0 items-center text-sm">
        <button aria-label="Show hidden icons" className="flex w-9 justify-center"><ChevronUp className="h-6 w-6" strokeWidth={1.4} /></button>
        <svg viewBox="0 0 16 16" className="ml-1 h-4 w-4" fill="none" stroke="#fff" strokeWidth="1.100"><path d="M1 15A14 14 0 0 1 15 1M5 15A10 10 0 0 1 15 5M9 15a6 6 0 0 1 6-6" /><circle cx="14" cy="14" r="1.500" fill="#fff" stroke="none" /></svg>
        <svg viewBox="0 0 20 16" className="ml-3 h-4 w-5"><path d="M6 4.500h12.500v9H5.500V9" fill="none" stroke="#fff" /><path d="M8 6.500h9v5H8z" fill="#fff" /><path d="M1 3h5v3L3.500 8 1 6zM2 0v3M5 0v3M3.500 8v4" fill="#fff" stroke="#fff" strokeWidth=".8" /><path d="M19 7v4" stroke="#fff" strokeWidth="1.500" /></svg>
        <Mute className="ml-2.5 h-4 w-5" />
        <button className="ml-3.5">ENG</button>
        <button className="ml-3 text-center leading-[23px]">5:17 pm<br />15/11/2024</button>
        <button aria-label="Notifications" className="mt-1.5 ml-[17px]"><Notice className="h-8 w-8" /></button>
        <span className="mr-1 ml-auto h-full w-px bg-[#6b7486]" />
      </div>
    </div>
  );
}

export default function App() {
  return (
    <div className="relative flex h-screen w-full flex-col overflow-hidden bg-white font-['Noto_Sans','Open_Sans',sans-serif]">
      <main className="min-h-0 flex-1"><Browser /></main>
      <ExplorerBack />
      <ExplorerFront />
      <Photos />
      <StoreClass />
      <Taskbar />
    </div>
  );
}
